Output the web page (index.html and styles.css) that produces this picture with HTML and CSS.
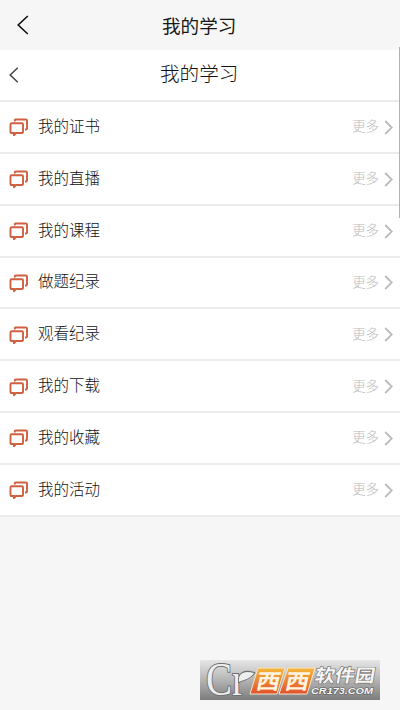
FILE: index.html
```html
<!DOCTYPE html>
<html lang="zh-CN">
<head>
<meta charset="utf-8">
<title>我的学习</title>
<link rel="stylesheet" href="styles.css">
</head>
<body>
<header class="topbar">
  <svg class="back-main" viewBox="0 0 12 20"><path d="M10.8 1 1.2 10 10.8 19"/></svg>
  <h1>我的学习</h1>
</header>
<section class="subbar">
  <svg class="back-sub" viewBox="0 0 10 16"><path d="M8.8.7 1.2 8 8.8 15.3"/></svg>
  <h2>我的学习</h2>
</section>
<svg class="defs"><defs>
  <g id="chat"><path d="M5.8 3.5V2.5Q5.8 1.5 6.8 1.5H17Q18 1.5 18 2.5V10.5Q18 11.5 17 11.5H16"/><path d="M2.5 5.2H13Q14 5.2 14 6.2V14Q14 15 13 15H7L5 17.2V15H2.5Q1.5 15 1.5 14V6.2Q1.5 5.2 2.5 5.2Z"/></g>
  <path id="next" d="M1.2 1 7.8 7.5 1.2 14"/>
</defs></svg>
<main class="list">
  <div class="row"><svg class="chat"><use href="#chat"/></svg><span class="name">我的证书</span><span class="more">更多</span><svg class="next"><use href="#next"/></svg></div>
  <div class="row"><svg class="chat"><use href="#chat"/></svg><span class="name">我的直播</span><span class="more">更多</span><svg class="next"><use href="#next"/></svg></div>
  <div class="row"><svg class="chat"><use href="#chat"/></svg><span class="name">我的课程</span><span class="more">更多</span><svg class="next"><use href="#next"/></svg></div>
  <div class="row"><svg class="chat"><use href="#chat"/></svg><span class="name">做题纪录</span><span class="more">更多</span><svg class="next"><use href="#next"/></svg></div>
  <div class="row"><svg class="chat"><use href="#chat"/></svg><span class="name">观看纪录</span><span class="more">更多</span><svg class="next"><use href="#next"/></svg></div>
  <div class="row"><svg class="chat"><use href="#chat"/></svg><span class="name">我的下载</span><span class="more">更多</span><svg class="next"><use href="#next"/></svg></div>
  <div class="row"><svg class="chat"><use href="#chat"/></svg><span class="name">我的收藏</span><span class="more">更多</span><svg class="next"><use href="#next"/></svg></div>
  <div class="row"><svg class="chat"><use href="#chat"/></svg><span class="name">我的活动</span><span class="more">更多</span><svg class="next"><use href="#next"/></svg></div>
</main>
<div class="scroll-mark"></div>
<svg class="brand" viewBox="0 0 180 40">
  <defs>
    <linearGradient id="metal" x2="0" y2="1"><stop stop-color="#e6e6e6"/><stop offset=".45" stop-color="#bababa"/><stop offset="1" stop-color="#7c7c7c"/></linearGradient>
    <linearGradient id="flame" x2="0" y2="1"><stop stop-color="#f4b83b"/><stop offset="1" stop-color="#e2502a"/></linearGradient>
  </defs>
  <rect width="180" height="40" fill="url(#metal)"/>
  <g class="silver">
    <text class="serif" x="6" y="35" textLength="39" lengthAdjust="spacingAndGlyphs">Cr</text>
    <path d="M39 22C38 13 44 10 54 13C50 19 45 19 39 22Z"/>
  </g>
  <path class="tile" d="M58 8H85L77 34H50Z"/>
  <path class="tile" d="M88 8H115L107 34H79Z"/>
  <text class="tile-text" transform="translate(55 29) skewX(-12)" textLength="24" lengthAdjust="spacingAndGlyphs">西</text>
  <text class="tile-text" transform="translate(84 29) skewX(-12)" textLength="24" lengthAdjust="spacingAndGlyphs">西</text>
  <text class="park" transform="translate(114 22) skewX(-10)" textLength="60" lengthAdjust="spacingAndGlyphs">软件园</text>
  <text class="domain" x="111" y="34" textLength="62" lengthAdjust="spacingAndGlyphs">CR173.COM</text>
</svg>
</body>
</html>
```
FILE: styles.css
```css
* { box-sizing: border-box; }
body {
  margin: 0;
  height: 710px;
  position: relative;
  overflow: hidden;
  background: #f6f6f6;
  font-family: "Noto Sans CJK SC", sans-serif;
}
h1, h2 { margin: 0; }
svg { display: block; flex: none; fill: none; }
.defs { position: absolute; width: 0; height: 0; }
.topbar { display: flex; align-items: center; height: 50px; padding-left: 17px; }
.back-main { width: 12px; height: 20px; stroke: #111; stroke-width: 1.6; }
.topbar h1 { margin-left: 133px; font-size: 18.6px; font-weight: 400; line-height: 49px; height: 50px; color: #181818; }
.subbar { display: flex; align-items: center; height: 50px; padding-left: 9px; background: #fff; }
.back-sub { width: 10px; height: 16px; stroke: #444; stroke-width: 1.5; }
.subbar h2 { margin-left: 141px; font-size: 19.6px; font-weight: 300; line-height: 45px; height: 50px; color: #111; }
.list { border-top: 2px solid #ececec; }
.row {
  display: flex;
  align-items: center;
  height: 51.85px;
  padding: 0 7px 0 9px;
  border-bottom: 2px solid #ececec;
  background: #fff;
}
.chat { width: 20px; height: 18px; margin-top: 1px; stroke: #cf6040; stroke-width: 1.9; }
.name { margin: -4px 0 0 9px; font-size: 15.5px; line-height: 46px; color: #111; font-weight: 300; }
.more { margin: -3px 0 0 auto; font-size: 13.4px; font-weight: 300; color: #bbb; }
.next { width: 9px; height: 15px; margin: 1px 0 0 5px; stroke: #bbb; stroke-width: 1.8; }
.scroll-mark { position: absolute; top: 47px; right: 0; width: 1px; height: 171px; background: #d7a0ae; }
.brand { position: absolute; left: 200px; top: 660px; width: 180px; height: 40px; overflow: visible; }
.silver { fill: #eee; stroke: #707070; stroke-width: 2; paint-order: stroke; }
.serif { font: 400 46px "Liberation Serif", serif; }
.tile { fill: url(#flame); stroke: #f7e6cd; stroke-width: 1; }
.tile-text { font-size: 21px; font-weight: 700; fill: #fff3df; }
.park { font-size: 18px; font-weight: 700; fill: #f5f5f5; stroke: #707070; stroke-width: 1.2; paint-order: stroke; }
.domain { font: italic 700 9.5px "Liberation Sans", sans-serif; fill: #f5f5f5; stroke: #606060; stroke-width: 1.2; paint-order: stroke; }
```
